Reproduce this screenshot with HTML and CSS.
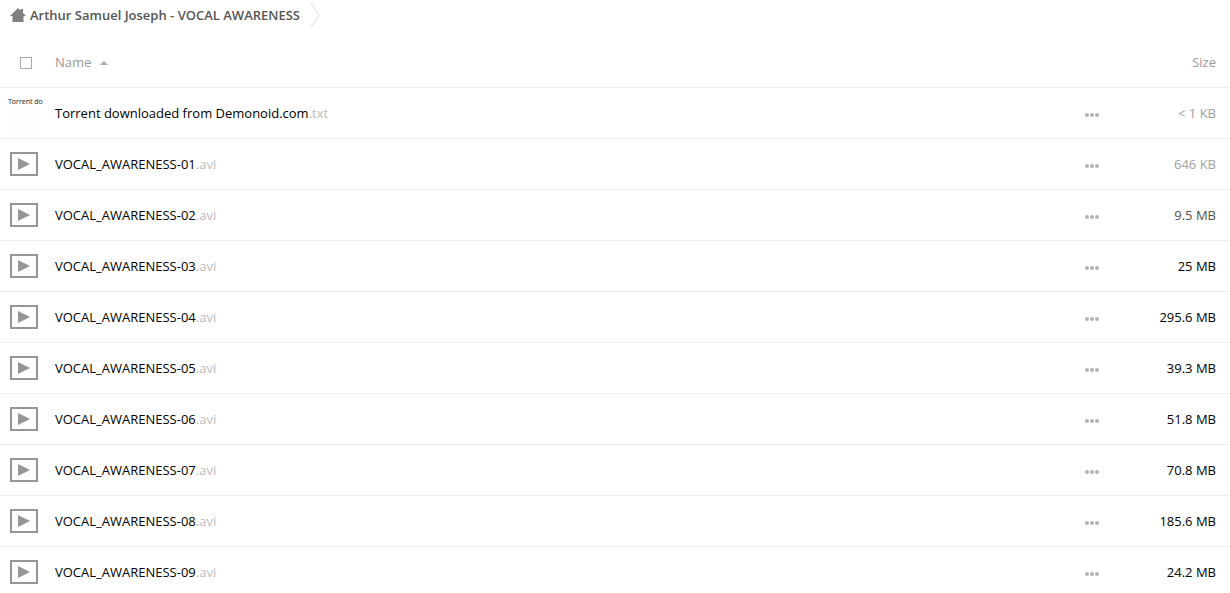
FILE: index.html
```
<!DOCTYPE html>
<html lang="en">
<head>
	<meta charset="UTF-8">
	<title>Files</title>
	<link rel="stylesheet" href="styles.css">
	<script src="files.js" defer></script>
</head>
<body>
	<!-- shared icons -->
	<svg class="sprite" aria-hidden="true">
		<symbol id="iconVideo" viewBox="0 0 28 24">
			<rect x="1" y="1" width="26" height="22" fill="none" stroke="#969696" stroke-width="2"/>
			<path d="M8 6v12l12-6z" fill="#969696"/>
		</symbol>
		<symbol id="iconMore" viewBox="0 0 14 4">
			<circle cx="2" cy="2" r="2"/>
			<circle cx="7" cy="2" r="2"/>
			<circle cx="12" cy="2" r="2"/>
		</symbol>
	</svg>
	<main class="files">
		<nav class="breadcrumb">
			<a href="#" class="home" aria-label="Home">
				<svg width="16" height="14" viewBox="0 0 16 14"><path d="M8 0l2.500 2.500V1H13v4L16 8h-2.500v6h-11V8H0z" fill="#808080"/></svg>
			</a>
			<a href="#" class="crumb">Arthur Samuel Joseph - VOCAL AWARENESS</a>
			<svg class="chevron" width="10" height="26" viewBox="0 0 10 26"><path d="M1 1l8 12-8 12" fill="none" stroke="#ddd"/></svg>
		</nav>
		<table class="fileTable">
			<thead>
				<tr>
					<th class="icon"><input type="checkbox" id="selectAll" aria-label="Select all"></th>
					<th class="name"><a href="#">Name <span class="sort"></span></a></th>
					<th class="actions"></th>
					<th class="size"><a href="#">Size</a></th>
				</tr>
			</thead>
			<tbody id="fileList">
				<tr>
					<td class="icon"><div class="thumb">Torrent do</div></td>
					<td class="name"><a href="#">Torrent downloaded from Demonoid.com<span class="ext">.txt</span></a></td>
					<td class="actions"><button type="button" aria-label="More"><svg width="14" height="4"><use href="#iconMore"/></svg></button></td>
					<td class="size tiny">&lt; 1 KB</td>
				</tr>
			</tbody>
		</table>
	</main>
</body>
</html>
```
FILE: styles.css
```
body{
	margin: 0;
	background: #fff;
	color: #000;
	font: 13px/20px "Open Sans", sans-serif;
}
a{
	color: inherit;
	text-decoration: none;
}
.sprite{
	display: none;
}
.files{
	height: 100vh;
	overflow: auto;
	scrollbar-width: none;
}
.breadcrumb{
	display: flex;
	align-items: center;
	height: 30px;
	padding: 0 10px 7px;
}
.home{
	display: flex;
	margin-right: 4px;
}
.crumb{
	color: #555;
	font-weight: 600;
}
.chevron{
	margin-left: 10px;
}
.fileTable{
	width: 100%;
	table-layout: fixed;
	border-spacing: 0;
}
th, td{
	box-sizing: border-box;
	height: 51px;
	padding: 0;
	border-bottom: 1px solid #eee;
	text-align: left;
	vertical-align: middle;
}
th{
	color: #999;
	font-weight: 400;
}
.icon{
	width: 55px;
}
.icon svg{
	display: block;
	margin-left: 10px;
}
.icon input{
	display: block;
	appearance: none;
	box-sizing: border-box;
	width: 12px;
	height: 12px;
	margin: 2px 0 0 20px;
	border: 1px solid #aaa;
	background: #fff;
}
.icon input:checked{
	background: #aaa;
}
.sort{
	display: inline-block;
	margin: 0 0 2px 5px;
	border: 4px solid transparent;
	border-top: 0;
	border-bottom-color: #aaa;
	vertical-align: middle;
}
.thumb{
	width: 32px;
	height: 32px;
	margin-left: 8px;
	background: #fdfdfd;
	color: #222;
	font-size: 7px;
	line-height: 10px;
	white-space: nowrap;
}
.ext{
	color: #bbb;
}
.actions{
	width: 30px;
}
.actions button{
	display: block;
	padding: 10px 8px 8px;
	border: 0;
	background: none;
	cursor: pointer;
}
.actions svg{
	display: block;
	margin-top: 2px;
	fill: #b2b2b2;
}
.size{
	width: 123px;
	padding-right: 14px;
	text-align: right;
}
.tiny{
	color: #a0a0a0;
}
.small{
	color: #505050;
}
```
FILE: files.js
```
var videos = [
	["01", "646 KB", "tiny"],
	["02", "9.5 MB", "small"],
	["03", "25 MB", ""],
	["04", "295.6 MB", ""],
	["05", "39.3 MB", ""],
	["06", "51.8 MB", ""],
	["07", "70.8 MB", ""],
	["08", "185.6 MB", ""],
	["09", "24.2 MB", ""]
];

var rows = "";
for(var i=0;i<videos.length;i++){
	rows += '<tr>' +
		'<td class="icon"><svg width="28" height="24"><use href="#iconVideo"/></svg></td>' +
		'<td class="name"><a href="#">VOCAL_AWARENESS-' + videos[i][0] + '<span class="ext">.avi</span></a></td>' +
		'<td class="actions"><button type="button" aria-label="More"><svg width="14" height="4"><use href="#iconMore"/></svg></button></td>' +
		'<td class="size ' + videos[i][2] + '">' + videos[i][1] + '</td>' +
		'</tr>';
}
document.getElementById("fileList").innerHTML += rows;
```
